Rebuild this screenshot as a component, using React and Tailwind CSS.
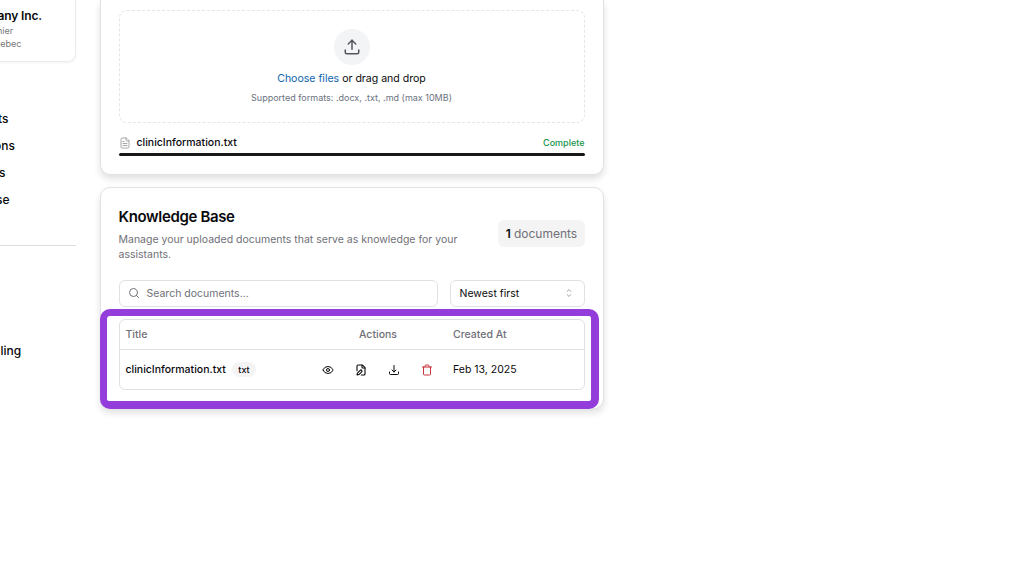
import React from 'react';
import { Eye, FilePen, FileText, Search, Trash } from 'lucide-react';

function Tray({ className, up = false, width = 2 }) {
  return (
    <svg className={className} viewBox="0 0 24 24" fill="none" stroke="currentColor" strokeWidth={width} strokeLinecap="round" strokeLinejoin="round">
      <path d="M3 16v3a2 2 0 0 0 2 2h14a2 2 0 0 0 2-2v-3" />
      <path d={up ? 'M7 8l5-5 5 5' : 'M8 12l4 4 4-4'} />
      <path d={up ? 'M12 3v12' : 'M12 3v13'} />
    </svg>
  );
}

function NavItem({ children }) {
  return <div className="flex h-[27px] items-center text-[12px] font-medium">{children}</div>;
}

function Sidebar() {
  return (
    <aside className="w-[76px] shrink-0">
      <div className="h-[62px] rounded-br-lg border-r border-b border-gray-200/80 pt-[8px] shadow-xs">
        <div className="-ml-[2.5px] text-[12px] leading-[16px] font-semibold tracking-[-0.15px] whitespace-nowrap">any Inc.</div>
        <div className="-ml-[3px] text-[9px] leading-[13px] text-[#777]">nier</div>
        <div className="-ml-[5px] text-[9px] leading-[13px] text-[#777]">uebec</div>
      </div>
      <nav className="mt-[43px] h-[141px] border-b border-[#dedede]">
        <NavItem><span className="-ml-[2px]">ts</span></NavItem>
        <NavItem><span className="-ml-[6px]">ons</span></NavItem>
        <NavItem><span className="-ml-px">s</span></NavItem>
        <NavItem><span className="-ml-[4px]">se</span></NavItem>
      </nav>
      <div className="mt-[96px] ml-[0.5px] text-[12px] leading-[18px] font-medium">ling</div>
    </aside>
  );
}

function UploadCard() {
  return (
    <section className="h-[175px] rounded-b-[10px] border border-t-0 border-[#e2e2e5] bg-white px-[18px] pt-[10px] shadow-[0_4px_7px_rgba(0,0,0,0.12)]">
      <div className="flex h-[113px] flex-col items-center rounded-lg border border-dashed border-[#e5e5e8] pt-[18px]">
        <div className="flex size-9 shrink-0 items-center justify-center rounded-full bg-[#f3f4f6] text-[#55565c]">
          <Tray up className="size-[18px]" />
        </div>
        <p className="mt-[6px] -ml-px text-[10.55px] leading-[16px]">
          <span className="text-[#1265ad]">Choose files</span> or drag and drop
        </p>
        <p className="mt-[4px] -ml-px text-[9px] leading-[13px] text-[#6b7280]">Supported formats: .docx, .txt, .md (max 10MB)</p>
      </div>
      <div className="mt-[11px] flex h-[17px] items-center">
        <FileText className="mt-px size-3 text-[#a4a4a8]" strokeWidth={1.9} />
        <span className="ml-[5.5px] text-[10.5px] font-medium">clinicInformation.txt</span>
        <span className="mr-[0.5px] ml-auto text-[9px] font-medium text-[#16944b]">Complete</span>
      </div>
      <div className="mt-[2px] h-[3px] rounded-full bg-[#18181b]" />
    </section>
  );
}

function DocumentsTable() {
  return (
    <div className="mt-[12px] h-[71px] rounded-md border border-[#e1e1e4] text-[10.5px]">
      <div className="flex h-[30px] items-center border-b border-[#e1e1e4] pl-[5.5px] font-medium text-[#707077]">
        <span className="w-[233.5px]">Title</span>
        <span className="w-[94px]">Actions</span>
        <span>Created At</span>
      </div>
      <div className="flex h-[39px] items-center pl-[5.5px]">
        <div className="flex w-[196.5px] items-center">
          <span className="font-medium">clinicInformation.txt</span>
          <span className="ml-[6px] rounded-full bg-[#f4f4f5] px-[6.5px] text-[9px] leading-[15px] font-medium">txt</span>
        </div>
        <div className="mt-px flex w-[131px] items-center gap-[21px]">
          <Eye className="size-3" />
          <FilePen className="size-3" strokeWidth={2.2} />
          <Tray className="size-3" />
          <Trash className="size-3 text-[#c9343a]" />
        </div>
        <span>Feb 13, 2025</span>
      </div>
    </div>
  );
}

function KnowledgeCard() {
  return (
    <section className="relative mt-[12px] h-[222px] rounded-[10px] border border-[#e2e2e5] bg-white px-[18px] pt-[19px] shadow-[0_4px_7px_rgba(0,0,0,0.12)]">
      <div className="flex h-[57px] justify-between">
        <div className="-ml-[0.5px] w-[350px]">
          <h2 className="text-[15px] leading-[20px] font-semibold tracking-[-0.35px]">Knowledge Base</h2>
          <p className="mt-[5px] text-[10.5px] leading-[15px] text-[#707077]">
            Manage your uploaded documents that serve as knowledge for your assistants.
          </p>
        </div>
        <div className="mt-[13px] flex h-[27px] w-[87px] items-center justify-center gap-[3px] rounded-md bg-[#f4f4f5] pt-px text-[12px] text-[#707077]">
          <span className="font-semibold text-[#09090b]">1</span>documents
        </div>
      </div>
      <div className="mt-[16px] flex h-[27px] gap-[12px]">
        <div className="flex w-[319px] items-center rounded-md border border-[#e1e1e4] pl-[8px]">
          <Search className="mb-px size-3 text-[#707077]" />
          <span className="ml-[6.5px] text-[10.5px] text-[#707077]">Search documents...</span>
        </div>
        <div className="flex flex-1 items-center justify-between rounded-md border border-[#e1e1e4] pr-[10px] pl-[8.5px] text-[10.5px]">
          Newest first
          <svg className="mb-px size-[10px] text-[#85858b]" viewBox="0 0 12 12" fill="none" stroke="currentColor" strokeWidth="0.9" strokeLinecap="round" strokeLinejoin="round">
            <path d="M3.8 4.1 6 1.9l2.2 2.2M3.8 7.9 6 10.1l2.2-2.2" />
          </svg>
        </div>
      </div>
      <DocumentsTable />
      <div className="pointer-events-none absolute top-[121px] -left-px h-[100px] w-[499px] rounded-[10px] border-[7px] border-r-[8px] border-b-[8px] border-[#933edb]" />
    </section>
  );
}

export default function App() {
  return (
    <div className="flex h-[577px] w-[1032px] gap-[24px] overflow-hidden bg-white font-['Inter',sans-serif] text-[#09090b]">
      <Sidebar />
      <main className="w-[504px] shrink-0">
        <UploadCard />
        <KnowledgeCard />
      </main>
    </div>
  );
}
